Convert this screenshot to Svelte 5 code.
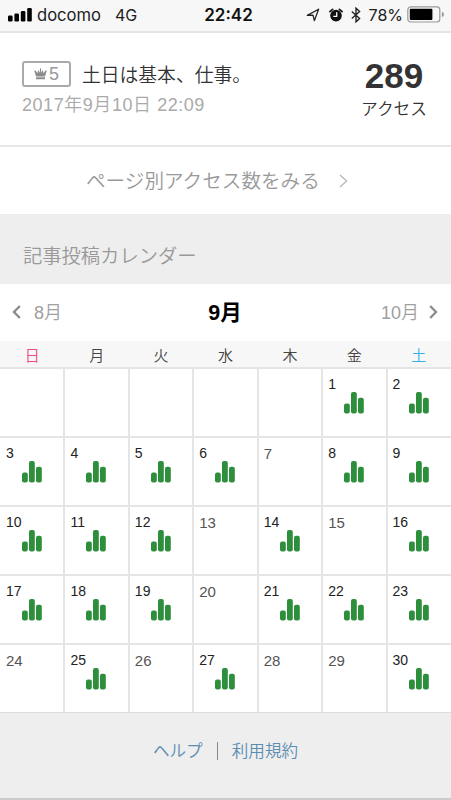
<!-- src/App.svelte -->
<script lang="ts">
  interface Day {
    date: number | null;
    posted: boolean;
  }

  const weekdays = ['日', '月', '火', '水', '木', '金', '土'];
  const emptyDays = [7, 13, 15, 20, 24, 26, 28, 29];
  const firstWeekday = 5;

  // 35 cells, five full weeks
  const days: Day[] = Array.from({ length: 35 }, (_, i) => {
    const date = i - firstWeekday + 1;
    if (date < 1) return { date: null, posted: false };
    return { date, posted: !emptyDays.includes(date) };
  });
</script>

<div class="screen">
  <div class="status-bar">
    <div class="status-left">
      <svg class="signal" width="24" height="14" viewBox="0 0 24 14">
        <rect x="0" y="7.5" width="4.6" height="6" rx="1.3" />
        <rect x="6.4" y="5.5" width="4.6" height="8" rx="1.3" />
        <rect x="12.8" y="3" width="4.6" height="10.5" rx="1.3" />
        <rect x="19.2" y="0" width="4.6" height="13.5" rx="1.3" />
      </svg>
      <span class="carrier">docomo</span>
      <span class="network">4G</span>
    </div>
    <div class="clock">22:42</div>
    <div class="status-right">
      <svg class="location" width="14" height="14" viewBox="0 0 14 14">
        <path d="M12.6 1.2L1.3 7.4L7 7.2L8.4 12.6Z" fill="none" stroke="#222" stroke-width="1.3" stroke-linejoin="round" />
      </svg>
      <svg class="alarm" width="14" height="14" viewBox="0 0 14 14">
        <circle cx="7" cy="7.6" r="5.8" fill="#111" />
        <path d="M.9 3.6L3.6 1.3M13.1 3.6L10.4 1.3" stroke="#111" stroke-width="1.7" stroke-linecap="round" />
        <path d="M7.7 4.2V8.4H4.3" fill="none" stroke="#fff" stroke-width="1.3" />
      </svg>
      <svg class="bluetooth" width="10" height="16" viewBox="0 0 10 16">
        <path d="M.8 4.4L8.6 11.4L5 14.8V1.2L8.6 4.6L.8 11.6" fill="none" stroke="#222" stroke-width="1.4" />
      </svg>
      <span class="percent">78%</span>
      <svg class="battery" width="38" height="17" viewBox="0 0 38 17">
        <rect x=".8" y=".8" width="32" height="15.2" rx="3" fill="none" stroke="#999" stroke-width="1.2" />
        <rect x="2.8" y="2.8" width="22.6" height="11.2" rx="1" />
        <path d="M34.9 5.8Q37 6.3 37 8.4T34.9 11Z" fill="#999" />
      </svg>
    </div>
  </div>

  <div class="article">
    <div class="article-info">
      <div class="article-title">
        <span class="rank">
          <svg width="13" height="12" viewBox="0 0 13 12">
            <path d="M.3 2.8L1.3 2.3L3.4 5.2L4.1 2L5.8 4.7L6 .3H7L7.2 4.7L8.9 2L9.6 5.2L11.7 2.3L12.7 2.8L11 8.4H2ZM2 9.2H11V11.3H2Z" fill="#8c8c8c" />
          </svg>
          <span>5</span>
        </span>
        <span class="title-text">土日は基本、仕事。</span>
      </div>
      <div class="article-date">2017年9月10日 22:09</div>
    </div>
    <div class="access">
      <div class="access-count">289</div>
      <div class="access-label">アクセス</div>
    </div>
  </div>

  <div class="page-link">
    <span>ページ別アクセス数をみる</span>
    <svg width="9" height="14" viewBox="0 0 9 14">
      <path d="M1 .9L7.6 7L1 13.1" fill="none" stroke="#bbb" stroke-width="1.4" />
    </svg>
  </div>

  <div class="section-heading">記事投稿カレンダー</div>

  <div class="month-nav">
    <div class="month-side">
      <svg width="9" height="14" viewBox="0 0 9 14">
        <path d="M7.8 1L2 7L7.8 13" fill="none" stroke="#8b8b8b" stroke-width="2.3" />
      </svg>
      <span>8月</span>
    </div>
    <div class="month-current">9月</div>
    <div class="month-side next">
      <span>10月</span>
      <svg width="9" height="14" viewBox="0 0 9 14">
        <path d="M1.2 1L7 7L1.2 13" fill="none" stroke="#8b8b8b" stroke-width="2.3" />
      </svg>
    </div>
  </div>

  <div class="weekdays">
    {#each weekdays as weekday, i (weekday)}
      <div class="weekday" class:sunday={i === 0} class:saturday={i === 6}>{weekday}</div>
    {/each}
  </div>

  <div class="calendar">
    {#each days as day, i (i)}
      <div class="day" class:posted={day.posted}>
        {#if day.date}
          <div class="date">{day.date}</div>
        {/if}
        {#if day.posted}
          <svg class="bars" width="20" height="22" viewBox="0 0 20 22">
            <rect x="0" y="11.5" width="5.8" height="10" rx="2" />
            <rect x="7" y="0" width="5.8" height="21.5" rx="2" />
            <rect x="14" y="5.7" width="5.8" height="15.8" rx="2" />
          </svg>
        {/if}
      </div>
    {/each}
  </div>

  <div class="footer">
    <span>ヘルプ</span>
    <span class="divider"></span>
    <span>利用規約</span>
  </div>
</div>

<style>
  :global(body) {
    margin: 0;
    background: #eee;
  }

  .screen {
    box-sizing: border-box;
    width: 451px;
    height: 800px;
    display: flex;
    flex-direction: column;
    overflow: hidden;
    background: #fff;
    border-bottom: 2px solid #ccc;
    font-family: 'Liberation Sans', 'Noto Sans CJK JP', sans-serif;
    font-weight: 350;
    color: #333;
  }

  .status-bar {
    box-sizing: border-box;
    height: 33px;
    flex: none;
    display: grid;
    grid-template-columns: 1fr auto 1fr;
    align-items: center;
    padding: 0 6px 2px 8px;
    background: #f7f7f7;
    border-bottom: 2px solid #e4e4e4;
    font-family: Inter, sans-serif;
    font-size: 16px;
    font-weight: 400;
    line-height: 28px;
    color: #222;
  }

  .status-left,
  .status-right {
    display: flex;
    align-items: center;
  }

  .carrier {
    margin-left: 5px;
    font-size: 16.6px;
  }

  .network {
    margin-left: 14px;
  }

  .clock {
    padding-left: 4px;
    font-size: 17px;
    font-weight: 600;
    color: #111;
  }

  .status-right {
    justify-content: flex-end;
  }

  .alarm {
    margin-left: 9px;
  }

  .bluetooth {
    margin-left: 8px;
  }

  .percent {
    margin-left: 8px;
  }

  .battery {
    margin-left: 4px;
  }

  .article {
    box-sizing: border-box;
    height: 114px;
    flex: none;
    display: flex;
    justify-content: space-between;
    padding: 26px 24px 0 22px;
    border-bottom: 2px solid #e8e8e8;
  }

  .article-title {
    display: flex;
    align-items: center;
    height: 30px;
  }

  .rank {
    box-sizing: border-box;
    width: 49px;
    height: 26px;
    display: flex;
    align-items: center;
    justify-content: center;
    gap: 2px;
    border: 2px solid #aaa;
    border-radius: 3px;
    font-size: 18px;
    color: #999;
  }

  .title-text {
    margin-left: 11px;
    padding-top: 3px;
    font-size: 18.8px;
    line-height: 30px;
    white-space: nowrap;
  }

  .article-date {
    margin-top: 4px;
    font-size: 18px;
    letter-spacing: 0.55px;
    line-height: 24px;
    color: #aaa;
  }

  .access {
    text-align: center;
  }

  .access-count {
    font-size: 35px;
    line-height: 34px;
    font-weight: 700;
  }

  .access-label {
    margin-top: 5px;
    font-size: 16.7px;
    line-height: 24px;
  }

  .page-link {
    box-sizing: border-box;
    height: 67px;
    flex: none;
    display: flex;
    align-items: center;
    padding: 0 0 2px 86px;
    font-size: 19.6px;
    color: #999;
  }

  .page-link svg {
    margin: 2px 0 0 19px;
  }

  .section-heading {
    box-sizing: border-box;
    height: 70px;
    flex: none;
    padding: 15px 0 0 23px;
    background: #eee;
    font-size: 19.3px;
    line-height: 56px;
    color: #999;
  }

  .month-nav {
    box-sizing: border-box;
    height: 57px;
    flex: none;
    display: grid;
    grid-template-columns: 1fr auto 1fr;
    align-items: center;
    padding: 0 13px 4px 12px;
  }

  .month-side {
    display: flex;
    align-items: center;
    gap: 13px;
    font-size: 18px;
    color: #a0a0a0;
  }

  .month-side svg {
    margin-top: 3px;
  }

  .month-side.next {
    justify-content: flex-end;
    gap: 10px;
  }

  .month-current {
    font-size: 21.5px;
    font-weight: 700;
    color: #000;
  }

  .weekdays,
  .calendar {
    display: grid;
    grid-template-columns: repeat(7, 1fr);
    flex: none;
  }

  .weekdays {
    box-sizing: border-box;
    height: 26px;
    background: #f7f7f7;
  }

  .weekday {
    text-align: center;
    font-size: 15px;
    line-height: 30px;
    color: #444;
  }

  .weekday.sunday {
    color: #f0487f;
  }

  .weekday.saturday {
    color: #35b0e8;
  }

  .calendar {
    height: 345px;
    grid-template-rows: repeat(5, 69px);
  }

  /* each vertical rule straddles two columns */
  .day {
    box-sizing: border-box;
    padding: 8px 0 0 6px;
    border-top: 2px solid #e5e5e5;
    box-shadow: 1px 0 0 #e5e5e5, inset -1px 0 0 #e5e5e5;
    color: #555;
  }

  .day:nth-child(7n) {
    box-shadow: none;
  }

  .date {
    font-size: 15px;
    font-weight: 400;
    line-height: 16px;
  }

  .day.posted .date {
    font-size: 14px;
    line-height: 15px;
    color: #222;
  }

  .bars {
    display: block;
    margin-left: 16px;
    fill: #2d8f3c;
  }

  .footer {
    flex: 1;
    display: flex;
    justify-content: center;
    padding-top: 25px;
    background: #eee;
    border-top: 1px solid #ddd;
    font-size: 16.6px;
    line-height: 28px;
    color: #5b8db3;
  }

  .divider {
    width: 1px;
    height: 18px;
    margin: 4px 14px 0;
    background: #888;
  }
</style>
